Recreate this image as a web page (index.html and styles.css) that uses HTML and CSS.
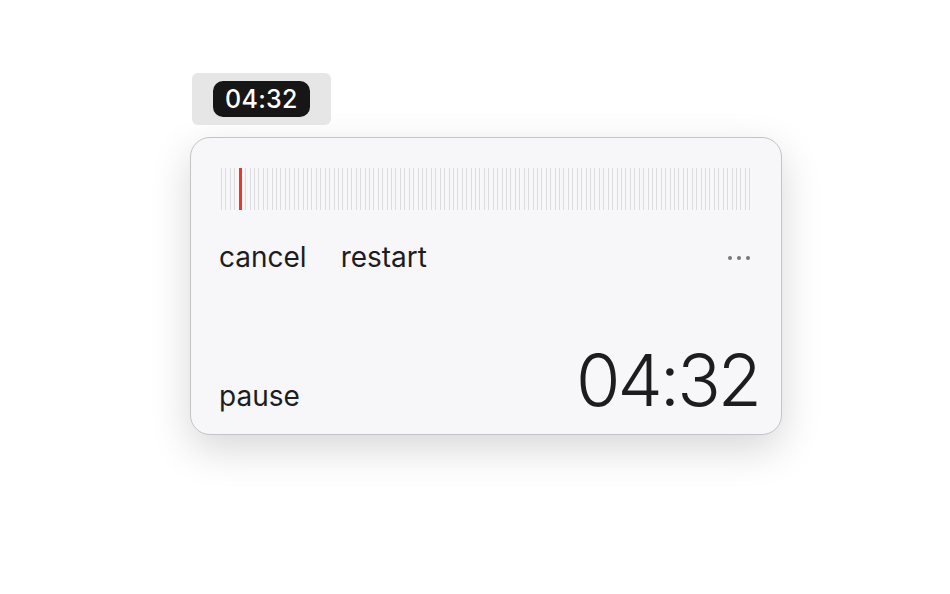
FILE: index.html
```html
<!DOCTYPE html>
<html lang="en">
<head>
    <meta charset="UTF-8">
    <meta name="viewport" content="width=device-width, initial-scale=1.0">
    <title>Timer</title>
    <link rel="stylesheet" href="styles.css">
</head>
<body>
    <div class="page">
        <div class="tab">
            <div class="tab-pill">04:32</div>
        </div>
        <div class="card">
            <div class="ticks" id="ticks"></div>
            <div class="controls">
                <span class="btn">cancel</span>
                <span class="btn">restart</span>
                <span class="more">
                    <svg width="24" height="6" viewBox="0 0 24 6">
                        <circle cx="3" cy="3" r="2" fill="#77777c"/>
                        <circle cx="12" cy="3" r="2" fill="#77777c"/>
                        <circle cx="21" cy="3" r="2" fill="#77777c"/>
                    </svg>
                </span>
            </div>
            <div class="bottom">
                <span class="btn">pause</span>
                <span class="time">04:32</span>
            </div>
        </div>
    </div>

    <script>
        const ticks = document.getElementById('ticks');
        for (let i = 0; i < 120; i++) {
            const tick = document.createElement('div');
            tick.classList.add('tick');
            if (i === 4) {
                tick.classList.add('current');
            }
            ticks.appendChild(tick);
        }
    </script>
</body>
</html>
```

FILE: styles.css
```css
* {
    margin: 0;
    padding: 0;
    box-sizing: border-box;
    font-family: Inter, "Noto Sans", sans-serif;
}

html, body {
    min-height: 100%;
    height: 100%;
}

body {
    background-color: #ffffff;
}

.page {
    padding: 73px 0 0 190px;
    min-height: 100%;
}

.tab {
    display: inline-flex;
    margin-left: 2px;
    padding: 8px 21px;
    background-color: #e6e6e7;
    border-radius: 6px;
    height: 52px;
}

.tab-pill {
    background-color: #161616;
    color: #ffffff;
    font-size: 25px;
    font-weight: 500;
    line-height: 36px;
    padding: 0 12px;
    border-radius: 10px;
    letter-spacing: 0.3px;
}

.card {
    width: 592px;
    height: 298px;
    margin-top: 12px;
    background-color: #f7f7f9;
    border: 1px solid #c4c4c8;
    border-radius: 20px;
    box-shadow: 0 14px 40px rgba(0, 0, 0, 0.16);
    padding: 30px 30px 0 30px;
    display: flex;
    flex-direction: column;
}

.ticks {
    display: flex;
    justify-content: space-between;
    height: 42px;
}

.tick {
    width: 1px;
    background-color: #dcdcde;
}

.tick.current {
    width: 3px;
    background-color: #e8392c;
}

.controls {
    display: flex;
    align-items: center;
    margin-top: 29px;
    height: 36px;
}

.btn {
    font-size: 28px;
    color: #1d1d1f;
    margin-right: 36px;
    margin-left: -2px;
}

.more {
    margin-left: auto;
    display: flex;
    padding-top: 2px;
}

.bottom {
    display: flex;
    align-items: baseline;
    justify-content: space-between;
    margin-top: auto;
    padding-bottom: 18px;
}

.bottom .btn {
    margin-right: 0;
}

.time {
    font-size: 72px;
    font-weight: 300;
    line-height: 72px;
    color: #1d1d1f;
    margin-right: -8px;
    letter-spacing: -3px;
}
```
